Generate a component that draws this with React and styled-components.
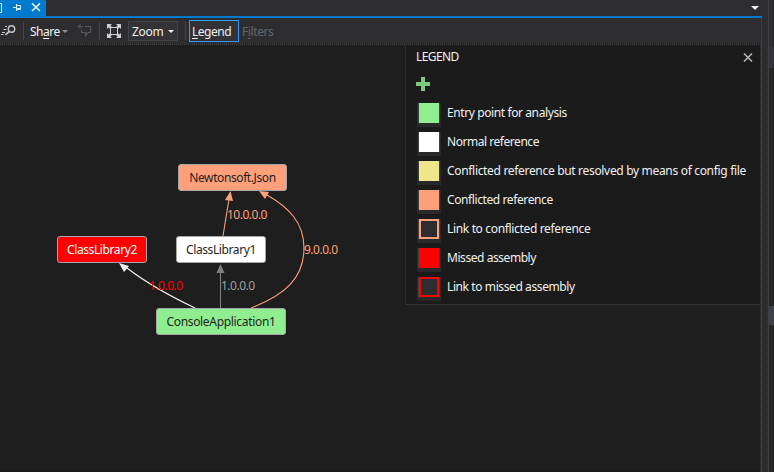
import React from "react";
import styled, { createGlobalStyle } from "styled-components";

const Global = createGlobalStyle`
  * { box-sizing: border-box; }
  html, body { margin: 0; background: #2d2d30; overflow: hidden; }
  body { font: 12px/16px "Noto Sans", "Open Sans", sans-serif; color: #f1f1f1; }
`;

const Window = styled.div`
  display: grid;
  grid-template-columns: 762px 6px 6px;
  width: 774px;
  height: 472px;
`;

const Main = styled.div`
  display: flex;
  flex-direction: column;
  border-right: 1px solid #3f3f46;
  height: 472px;
`;

const TabStrip = styled.div`
  display: flex;
  justify-content: space-between;
  height: 18px;
  margin-right: -1px;
  background: #2d2d30;
  border-bottom: 2px solid #007acc;
`;

const Tab = styled.div`
  width: 46px;
  height: 16px;
  background: #007acc;
`;

const Icon = styled.svg`
  display: block;
  flex: none;
`;

const Toolbar = styled.div`
  display: flex;
  align-items: center;
  flex: none;
  height: 26px;
  background: #2d2d30;
`;

const Label = styled.span`
  display: inline-block;
  width: ${(p) => p.$w}px;
  white-space: nowrap;
  letter-spacing: ${(p) => p.$ls || 0}px;
  color: ${(p) => p.$color || "inherit"};
  u { text-underline-offset: 2px; text-decoration-thickness: 1px; }
`;

const Separator = styled.div`
  width: 1px;
  height: 18px;
  background: #46464a;
`;

const ToolButton = styled.div`
  display: flex;
  align-items: center;
  height: ${(p) => (p.$active ? 22 : 20)}px;
  width: ${(p) => p.$w}px;
  padding-left: ${(p) => p.$pad || 0}px;
  padding-top: 1px;
  margin-left: ${(p) => p.$ml || 0}px;
  border: ${(p) => (p.$border ? `1px solid ${p.$border}` : "none")};
  background: ${(p) => (p.$border ? "#333337" : "transparent")};
`;

const Canvas = styled.div`
  position: relative;
  flex: 1;
  background: #1e1e1e;
  border-top: 1px dotted #48484b;
  border-right: 1px dotted #3c3c40;
  box-shadow: inset 0 -2px 0 #1b1b1c;
`;

const Edges = styled.svg`
  position: absolute;
  left: 0;
  top: -1px;
`;

const Node = styled.div`
  position: absolute;
  left: ${(p) => p.$x}px;
  top: ${(p) => p.$y - 45}px;
  width: ${(p) => p.$w}px;
  height: 27px;
  display: flex;
  align-items: center;
  justify-content: center;
  border: 1px solid #a5a6a9;
  border-radius: 3px;
  background: ${(p) => p.$bg};
  color: ${(p) => p.$color || "#1e1e1e"};
  letter-spacing: ${(p) => p.$ls}px;
  white-space: nowrap;
  padding-top: 1px;
`;

const EdgeLabel = styled.span`
  position: absolute;
  left: ${(p) => p.$x}px;
  top: ${(p) => p.$y - 45}px;
  color: ${(p) => p.$color};
  letter-spacing: -0.5px;
`;

const Legend = styled.section`
  position: absolute;
  right: 0;
  top: 0;
  width: 355px;
  height: 260px;
  background: #1b1b1c;
  border-left: 1px solid #29292b;
  border-bottom: 1px solid #333337;
  padding: 4px 7px 0 10px;
`;

const LegendHeader = styled.header`
  display: flex;
  align-items: center;
  justify-content: space-between;
  height: 16px;
`;

const AddIcon = styled(Icon)`
  margin-top: 12px;
`;

const LegendList = styled.div`
  display: grid;
  grid-auto-rows: 29px;
  margin: 12px 0 0 1px;
`;

const LegendRow = styled.div`
  display: grid;
  grid-template-columns: 24px auto;
  column-gap: 6px;
  align-items: start;
`;

const SwatchFrame = styled.div`
  width: 24px;
  height: 24px;
  background: #29292b;
`;

const Swatch = styled.div`
  width: 20px;
  height: 20px;
  margin-left: 2px;
  background: ${(p) => (p.$link ? "#2d2d30" : p.$color)};
  border: ${(p) => (p.$link ? `2px solid ${p.$color}` : "none")};
  box-shadow: -1px 0 0 #3f3f42, 1px 0 0 #3f3f42;
`;

const LegendText = styled(Label)`
  padding-top: 2px;
`;

const Gutter = styled.div`
  background: #2d2d30;
`;

const SidePanel = styled.div`
  border-left: 1px solid #3f3f46;
  background: #252526;
`;

const SideBlock = styled.div`
  height: ${(p) => p.$h}px;
  background: ${(p) => p.$bg};
`;

const nodes = [
  { x: 178, y: 164, w: 109, bg: "#ffa07a", ls: -0.4, text: "Newtonsoft.Json" },
  { x: 57, y: 236, w: 90, bg: "#ff0000", color: "#ffffff", ls: -0.4, text: "ClassLibrary2" },
  { x: 176, y: 236, w: 90, bg: "#ffffff", ls: -0.4, text: "ClassLibrary1" },
  { x: 156, y: 308, w: 130, bg: "#90ee90", ls: -0.32, text: "ConsoleApplication1" },
];

const legend = [
  { text: "Entry point for analysis", color: "#90ee90", w: 120, ls: -0.4 },
  { text: "Normal reference", color: "#ffffff", w: 92, ls: -0.46 },
  { text: "Conflicted reference but resolved by means of config file", color: "#f0e68c", w: 299, ls: -0.32 },
  { text: "Conflicted reference", color: "#ffa07a", w: 106, ls: -0.4 },
  { text: "Link to conflicted reference", color: "#ffa07a", w: 143, ls: -0.34, link: true },
  { text: "Missed assembly", color: "#ff0000", w: 89, ls: -0.44 },
  { text: "Link to missed assembly", color: "#ff0000", w: 127, ls: -0.4, link: true },
];

export default function App() {
  return (
    <>
      <Global />
      <Window>
        <Main>
          <TabStrip>
            <Tab>
              <Icon width="46" height="16" fill="none" stroke="#d8efff">
                <path d="M-1 3.5H1.5V12.5H-1" />
                <path d="M13 7.5H16.5M16.5 4V11M16.5 5.5H20.5V9.5H16.5M16.5 8.5H20.5" />
                <path d="M32 3.3L40 11M40 3.3L32 11" strokeWidth="1.6" />
              </Icon>
            </Tab>
            <Icon width="14" height="16"><path d="M3 6H11L7 10Z" fill="#f1f1f1" /></Icon>
          </TabStrip>
          <Toolbar>
            <Icon width="23" height="26" fill="none" stroke="#c8c8c8">
              <circle cx="11.5" cy="11" r="3.2" strokeWidth="1.4" />
              <path d="M9.2 13.3L5.5 17" strokeWidth="1.7" />
              <path d="M5 8.5H7M3.5 11.5H6.5M2 14.5H5M1 16.5H3.5" />
            </Icon>
            <Separator />
            <ToolButton $w={47} $ml={6}>
              <Label $w={32} $ls={-0.5}>Sh<u>a</u>re</Label>
              <Icon width="8" height="6"><path d="M0 1H6L3 4Z" fill="#8d8d8f" /></Icon>
            </ToolButton>
            <Icon width="22" height="26" fill="none" stroke="#55555a" strokeWidth="1.2">
              <path d="M3 5.5V11M0 8.5H6M8 8.5H13.5V14.5H11L8.5 17.5V14.5H4.5V12" />
            </Icon>
            <Separator />
            <Icon width="22" height="26" viewBox="0 0 22 26">
              <g fill="#d0d0d0">
                <path d="M7 6H12L10.4 7.6L13 10.2L11.2 12L8.6 9.4L7 11Z" />
                <path d="M21 6H16L17.6 7.6L15 10.2L16.8 12L19.4 9.4L21 11Z" />
                <path d="M7 20H12L10.4 18.4L13 15.8L11.2 14L8.6 16.6L7 15Z" />
                <path d="M21 20H16L17.6 18.4L15 15.8L16.8 14L19.4 16.6L21 15Z" />
              </g>
              <rect x="10.5" y="9.5" width="7" height="7" fill="#2d2d30" stroke="#d0d0d0" />
            </Icon>
            <ToolButton $w={50} $ml={6} $pad={3} $border="#434346">
              <Label $w={34} $ls={-0.3}>Zoom</Label>
              <Icon width="9" height="6"><path d="M2 1H8L5 4Z" fill="#f1f1f1" /></Icon>
            </ToolButton>
            <ToolButton $w={7} />
            <Separator />
            <ToolButton $active $w={50} $ml={3} $pad={2} $border="#3399ff">
              <Label $w={40} $ls={-0.5}><u>L</u>egend</Label>
            </ToolButton>
            <ToolButton $ml={3}>
              <Label $w={32} $ls={-0.4} $color="#656569">F<u>i</u>lters</Label>
            </ToolButton>
          </Toolbar>
          <Canvas>
            <Edges width="400" height="340" viewBox="0 44 400 340" fill="none" strokeWidth="1.1">
              <path d="M195 308Q153 288 127 268" stroke="#f1f1f1" />
              <path d="M119 263L129 266L124 272Z" fill="#f1f1f1" />
              <path d="M220.5 308V272" stroke="#808080" />
              <path d="M220.5 264L224.5 273H216.5Z" fill="#808080" />
              <path d="M223 236L229 199" stroke="#ffa07a" />
              <path d="M230.5 191L233 201L225 200Z" fill="#ffa07a" />
              <path d="M251 308C285 295 304 278 304 248C304 222 288 207 267 195" stroke="#ffa07a" />
              <path d="M259 191L269 192L265 199Z" fill="#ffa07a" />
            </Edges>
            {nodes.map((n) => (
              <Node key={n.text} $x={n.x} $y={n.y} $w={n.w} $bg={n.bg} $color={n.color} $ls={n.ls}>{n.text}</Node>
            ))}
            <EdgeLabel $x={227} $y={207} $color="#ffa07a">10.0.0.0</EdgeLabel>
            <EdgeLabel $x={304} $y={242} $color="#ffa07a">9.0.0.0</EdgeLabel>
            <EdgeLabel $x={149} $y={278} $color="#ff0000">1.0.0.0</EdgeLabel>
            <EdgeLabel $x={221} $y={278} $color="#a0a0a0">1.0.0.0</EdgeLabel>
            <Legend>
              <LegendHeader>
                <Label $w={43} $ls={-0.6}>LEGEND</Label>
                <Icon width="10" height="9" stroke="#b8b8b8" strokeWidth="1.5"><path d="M1 0.5L9 8.5M9 0.5L1 8.5" /></Icon>
              </LegendHeader>
              <AddIcon width="14" height="14"><path d="M5 0H9V5H14V9H9V14H5V9H0V5H5Z" fill="#7ccb7c" /></AddIcon>
              <LegendList>
                {legend.map((item) => (
                  <LegendRow key={item.text}>
                    <SwatchFrame><Swatch $color={item.color} $link={item.link} /></SwatchFrame>
                    <LegendText $w={item.w} $ls={item.ls}>{item.text}</LegendText>
                  </LegendRow>
                ))}
              </LegendList>
            </Legend>
          </Canvas>
        </Main>
        <Gutter />
        <SidePanel>
          <SideBlock $h={47} $bg="#2d2d30" />
          <SideBlock $h={21} $bg="#333337" />
          <SideBlock $h={238} $bg="#252526" />
          <SideBlock $h={19} $bg="#3f3f46" />
        </SidePanel>
      </Window>
    </>
  );
}
